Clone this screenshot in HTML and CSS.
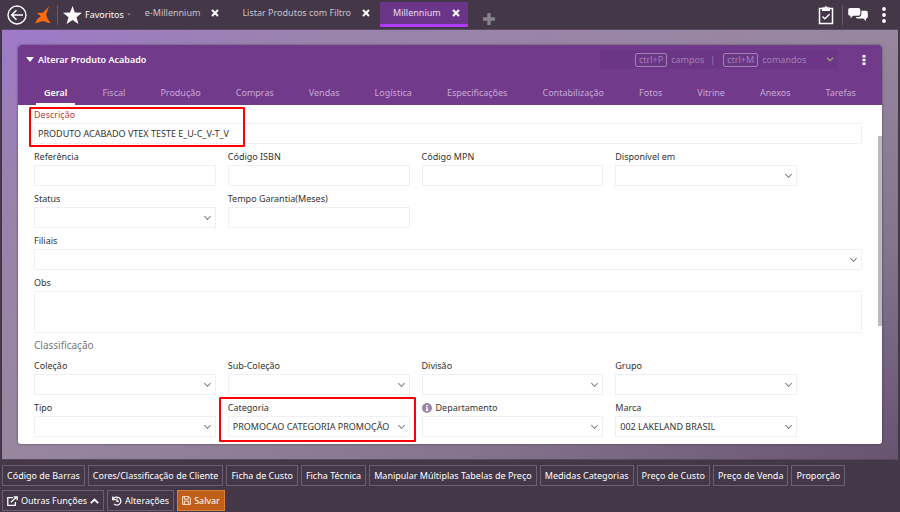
FILE: index.html
```
<!DOCTYPE html>
<html lang="pt-BR">
<head>
    <meta charset="UTF-8">
    <meta name="viewport" content="width=device-width, initial-scale=1">
    <title>Millennium</title>
    <link rel="stylesheet" href="styles.css">
</head>
<body>
    <header class="topbar">
        <button type="button" class="icon-button" aria-label="Voltar">
            <svg width="20" height="20" viewBox="0 0 20 20" fill="none" stroke="#fff">
                <circle cx="10" cy="10" r="9" stroke-width="1.4"/>
                <path d="M16 10H5M9.5 5.2L4.7 10l4.8 4.8" stroke-width="1.5"/>
            </svg>
        </button>
        <a href="#" class="logo" aria-label="Início">
            <svg width="16" height="18" viewBox="0 0 16 18" fill="#ff6a0a">
                <path d="M14 .5L11.200 8.200L12.200 12L15.600 17.500L8 15L0 17.500L2.500 12.800L6 10.300L1.800 7L8 6.800Z"/>
            </svg>
        </a>
        <button type="button" class="favorites">
            <svg width="19" height="18" viewBox="0 0 19 18" fill="#fff">
                <path d="M9.5 0l2.4 6.5 7.1.3-5.5 4.4 1.9 6.8-5.9-3.9L3.6 18l1.9-6.8L0 6.8l7.1-.3z"/>
            </svg>
            Favoritos
            <svg class="caret" width="4" height="3" viewBox="0 0 4 3" fill="#8b8190"><path d="M0 .5h4L2 2.5z"/></svg>
        </button>
        <nav class="windows">
            <div class="window">
                <a href="#">e-Millennium</a>
                <button type="button" class="close" aria-label="Fechar"><svg width="8" height="8" viewBox="0 0 8 8"><path d="M1 1l6 6M7 1L1 7"/></svg></button>
            </div>
            <div class="window">
                <a href="#">Listar Produtos com Filtro</a>
                <button type="button" class="close" aria-label="Fechar"><svg width="8" height="8" viewBox="0 0 8 8"><path d="M1 1l6 6M7 1L1 7"/></svg></button>
            </div>
            <div class="window window-active">
                <a href="#">Millennium</a>
                <button type="button" class="close" aria-label="Fechar"><svg width="8" height="8" viewBox="0 0 8 8"><path d="M1 1l6 6M7 1L1 7"/></svg></button>
            </div>
            <button type="button" class="add" aria-label="Nova aba">
                <svg width="12" height="12" viewBox="0 0 12 12" fill="#87838a"><path d="M4.3 0h3.4v4.3H12v3.4H7.7V12H4.3V7.7H0V4.3h4.3z"/></svg>
            </button>
        </nav>
        <div class="tools">
            <button type="button" class="icon-button" aria-label="Tarefas">
                <svg width="16" height="20" viewBox="0 0 16 20" fill="none" stroke="#fff">
                    <path d="M1.5 3.500h13v15h-13z" stroke-width="1.5"/>
                    <path d="M4 2.500h2.300a1.800 1.800 0 0 1 3.400 0H12v3.500H4z" fill="#fff" stroke="none"/>
                    <path d="M4.500 11.500l2.300 2.300 4.800-4.600" stroke-width="1.300"/>
                </svg>
            </button>
            <button type="button" class="icon-button chat" aria-label="Mensagens">
                <svg width="20" height="15" viewBox="0 0 20 15" fill="#fff">
                    <path d="M2 1h8.500a1.800 1.800 0 0 1 1.800 1.800V7a1.800 1.800 0 0 1-1.800 1.800H5L2.500 11.300V8.800H2A1.800 1.800 0 0 1 .2 7V2.800A1.800 1.800 0 0 1 2 1z"/>
                    <path d="M13.300 3.800H18A1.800 1.800 0 0 1 19.800 5.600V9.800A1.800 1.800 0 0 1 18 11.600V14l-2.600-2.400H9.800A1.800 1.800 0 0 1 8 9.900h2.900a2.400 2.400 0 0 0 2.400-2.400z"/>
                </svg>
            </button>
            <button type="button" class="icon-button" aria-label="Mais opções">
                <svg width="4" height="16" viewBox="0 0 4 16" fill="#fff"><circle cx="2" cy="2" r="1.900"/><circle cx="2" cy="8" r="1.900"/><circle cx="2" cy="14" r="1.900"/></svg>
            </button>
        </div>
    </header>

    <main class="workspace">
        <section class="card">
            <div class="card-header">
                <div class="title-row">
                    <h1>
                        <svg width="8" height="5" viewBox="0 0 8 5" fill="#fff"><path d="M0 0h8L4 5z"/></svg>
                        Alterar Produto Acabado
                    </h1>
                    <button type="button" class="search">
                        <kbd>ctrl+P</kbd> campos <span class="bar">|</span> <kbd>ctrl+M</kbd> comandos
                        <svg width="8" height="5" viewBox="0 0 8 5" fill="none" stroke="#a09a78" stroke-width="1.400"><path d="M1 .8l3 3 3-3"/></svg>
                    </button>
                    <button type="button" class="icon-button" aria-label="Opções">
                        <svg width="4" height="10" viewBox="0 0 4 10" fill="#fff"><path d="M.5 0h3v2.500h-3zM.5 3.700h3v2.500h-3zM.5 7.400h3v2.500h-3z"/></svg>
                    </button>
                </div>
                <nav class="tabs">
                    <a href="#" class="active">Geral</a>
                    <a href="#">Fiscal</a>
                    <a href="#">Produção</a>
                    <a href="#">Compras</a>
                    <a href="#">Vendas</a>
                    <a href="#">Logística</a>
                    <a href="#">Especificações</a>
                    <a href="#">Contabilização</a>
                    <a href="#">Fotos</a>
                    <a href="#">Vitrine</a>
                    <a href="#">Anexos</a>
                    <a href="#">Tarefas</a>
                </nav>
            </div>

            <form class="card-body">
                <div class="field required mark-descricao">
                    <label for="descricao">Descrição</label>
                    <input type="text" id="descricao" value="PRODUTO ACABADO VTEX TESTE E_U-C_V-T_V">
                </div>
                <div class="fields">
                    <div class="field">
                        <label for="referencia">Referência</label>
                        <input type="text" id="referencia">
                    </div>
                    <div class="field">
                        <label for="isbn">Código ISBN</label>
                        <input type="text" id="isbn">
                    </div>
                    <div class="field">
                        <label for="mpn">Código MPN</label>
                        <input type="text" id="mpn">
                    </div>
                    <div class="field">
                        <label for="disponivel">Disponível em</label>
                        <div class="select"><select id="disponivel"><option></option></select></div>
                    </div>
                    <div class="field">
                        <label for="status">Status</label>
                        <div class="select"><select id="status"><option></option></select></div>
                    </div>
                    <div class="field">
                        <label for="garantia">Tempo Garantia(Meses)</label>
                        <input type="text" id="garantia">
                    </div>
                </div>
                <div class="field">
                    <label for="filiais">Filiais</label>
                    <div class="select"><select id="filiais"><option></option></select></div>
                </div>
                <div class="field">
                    <label for="obs">Obs</label>
                    <textarea id="obs"></textarea>
                </div>
                <h2>Classificação</h2>
                <div class="fields">
                    <div class="field">
                        <label for="colecao">Coleção</label>
                        <div class="select"><select id="colecao"><option></option></select></div>
                    </div>
                    <div class="field">
                        <label for="subcolecao">Sub-Coleção</label>
                        <div class="select"><select id="subcolecao"><option></option></select></div>
                    </div>
                    <div class="field">
                        <label for="divisao">Divisão</label>
                        <div class="select"><select id="divisao"><option></option></select></div>
                    </div>
                    <div class="field">
                        <label for="grupo">Grupo</label>
                        <div class="select"><select id="grupo"><option></option></select></div>
                    </div>
                    <div class="field">
                        <label for="tipo">Tipo</label>
                        <div class="select"><select id="tipo"><option></option></select></div>
                    </div>
                    <div class="field mark-categoria">
                        <label for="categoria">Categoria</label>
                        <div class="select"><select id="categoria"><option>PROMOCAO CATEGORIA PROMOÇÃO</option></select></div>
                    </div>
                    <div class="field">
                        <label for="departamento">
                            <svg width="10" height="10" viewBox="0 0 10 10"><circle cx="5" cy="5" r="5" fill="#9a88a6"/><path d="M4.200 2h1.600v1.300H4.200zM3.900 4.200h1.900V7h.5v.9H3.700V7h.6V5.100h-.4z" fill="#fff"/></svg>
                            Departamento
                        </label>
                        <div class="select"><select id="departamento"><option></option></select></div>
                    </div>
                    <div class="field">
                        <label for="marca">Marca</label>
                        <div class="select"><select id="marca"><option>002 LAKELAND BRASIL</option></select></div>
                    </div>
                </div>
            </form>
            <div class="scrollbar"></div>
        </section>
    </main>

    <footer class="actions">
        <div class="action-row">
            <button type="button">Código de Barras</button>
            <button type="button">Cores/Classificação de Cliente</button>
            <button type="button">Ficha de Custo</button>
            <button type="button">Ficha Técnica</button>
            <button type="button">Manipular Múltiplas Tabelas de Preço</button>
            <button type="button">Medidas Categorias</button>
            <button type="button">Preço de Custo</button>
            <button type="button">Preço de Venda</button>
            <button type="button">Proporção</button>
        </div>
        <div class="action-row">
            <button type="button">
                <svg width="11" height="10" viewBox="0 0 11 10" fill="none" stroke="#fff" stroke-width="1.300"><path d="M6 1.700H.8v7.600h7.600V6M3.800 6.300L9.500 1.200M6.600.8h3.600v3.400"/></svg>
                Outras Funções
                <svg width="9" height="6" viewBox="0 0 9 6" fill="none" stroke="#fff" stroke-width="1.800"><path d="M.8 5.200l3.700-3.700 3.700 3.700"/></svg>
            </button>
            <button type="button">
                <svg width="10" height="10" viewBox="0 0 10 10" fill="none" stroke="#fff" stroke-width="1.300"><path d="M1.300 3.300A4 4 0 1 1 2 7.900M.8.600v3h3M5 2.600v2.800h1.800"/></svg>
                Alterações
            </button>
            <button type="submit" class="save">
                <svg width="9" height="9" viewBox="0 0 9 9" fill="none" stroke="#ffe2c8"><path d="M.6.600h6.300l1.500 1.500v6.300H.6zM2.300.8v2.400h4V.8M2.300 8.200V5.200h4.400v3"/></svg>
                Salvar
            </button>
        </div>
    </footer>
</body>
</html>
```
FILE: styles.css
```
*,
*::before,
*::after {
    box-sizing: border-box;
}

body {
    display: flex;
    flex-direction: column;
    min-height: 100vh;
    margin: 0;
    background: #433748;
    color: #333;
    font-family: "Noto Sans", "Open Sans", sans-serif;
    font-size: 9px;
    line-height: 14px;
}

button,
input,
select,
textarea {
    margin: 0;
    font: inherit;
    color: inherit;
}

button {
    padding: 0;
    border: 0;
    background: none;
    cursor: pointer;
}

a {
    color: inherit;
    text-decoration: none;
}

svg {
    flex: none;
}

.icon-button {
    display: flex;
    align-items: center;
}

/* top bar */
.topbar {
    display: flex;
    align-items: center;
    height: 29px;
    padding: 0 14px 0 7px;
    color: #fff;
}

.logo {
    display: flex;
    margin-left: 8px;
}

.favorites {
    display: flex;
    align-items: center;
    gap: 3px;
    height: 20px;
    margin-left: 6px;
    padding-left: 5px;
    border-left: 1px solid #65596a;
}

.windows {
    display: flex;
    align-items: center;
    gap: 2px;
    flex: 1;
    margin-left: 1px;
}

.window {
    display: flex;
    align-items: center;
    gap: 11px;
    height: 25px;
    padding: 0 8px 0 13px;
    border-bottom: 3px solid transparent;
    color: #c9c3cc;
}

.window-active {
    border-color: #b13cf5;
    background: #6c3688;
    color: #e8dcf0;
}

.close {
    display: flex;
}

.close path {
    fill: none;
    stroke: #fff;
    stroke-width: 2;
}

.add {
    display: flex;
    margin: 8px 0 0 13px;
}

.tools {
    display: flex;
    align-items: center;
    gap: 8px;
}

.chat {
    height: 20px;
    margin-right: 6px;
    padding-left: 5px;
    border-left: 1px solid #65596a;
}

/* workspace */
.workspace {
    flex: 1;
    margin: 0 2px;
    padding: 15px 16px;
    border: solid #594a63;
    border-width: 1px 0;
    background: linear-gradient(to bottom right, #9e79ca 0%, #9a83ad 18%, #98869f 50%, #84748e 75%, #665370 100%);
}

.card {
    position: relative;
    border-radius: 3px;
    background: #fff;
    box-shadow: 0 0 3px rgba(0, 0, 0, 0.4);
}

.card-header {
    display: flex;
    flex-direction: column;
    justify-content: space-between;
    height: 60px;
    padding: 5px 18px 0;
    border-radius: 3px 3px 0 0;
    background: #713a8b;
    color: #fff;
}

.title-row {
    display: flex;
    align-items: center;
    margin-left: -10px;
    margin-right: -2px;
}

h1 {
    display: flex;
    align-items: center;
    gap: 4px;
    flex: 1;
    margin: 0;
    font-size: 9px;
    font-weight: 600;
}

.search {
    display: flex;
    align-items: center;
    gap: 4px;
    height: 19px;
    width: 238px;
    margin-right: 24px;
    padding: 0 4px 0 35px;
    border-radius: 3px;
    background: #6b3685;
    color: #a37fb4;
}

.search kbd {
    padding: 0 3px;
    border: 1px solid #a37fb4;
    border-radius: 2px;
    font: inherit;
    line-height: 12px;
}

.search .bar {
    margin: 0 4px 0 2px;
}

.search svg {
    margin-left: auto;
}

.tabs {
    display: flex;
    justify-content: space-between;
    line-height: 16px;
}

.tabs a {
    height: 20px;
    padding: 0 8px;
    border-bottom: 2px solid transparent;
    color: #c9a9d6;
}

.tabs .active {
    border-color: #fff;
    color: #fff;
    font-weight: 600;
}

/* form */
.card-body {
    display: flex;
    flex-direction: column;
    gap: 5px;
    padding: 2px 20px 7px 16px;
}

.fields {
    display: grid;
    grid-template-columns: repeat(4, 1fr);
    gap: 5px 12px;
    padding-right: 65px;
}

.field {
    display: flex;
    flex-direction: column;
    gap: 2px;
    position: relative;
    min-width: 0;
}

.field label {
    display: flex;
    align-items: center;
    gap: 4px;
    height: 14px;
    padding-top: 2px;
}

.required label {
    color: #b8433c;
}

.field input,
.field select,
.field textarea {
    display: block;
    width: 100%;
    height: 21px;
    padding: 0 3px;
    border: 1px solid #efeff4;
    border-radius: 0;
    outline: 0;
    background: #fff;
}

.field select {
    appearance: none;
    padding: 0 14px 0 4px;
}

.field textarea {
    height: 42px;
    resize: none;
}

.select {
    position: relative;
}

.select::after {
    content: "";
    position: absolute;
    top: 7px;
    right: 6px;
    width: 5px;
    height: 5px;
    border: solid #808080;
    border-width: 0 1px 1px 0;
    transform: rotate(45deg);
    pointer-events: none;
}

h2 {
    margin: 0;
    color: #777;
    font-size: 10px;
    font-weight: 400;
    line-height: 15px;
}

.mark-descricao::before,
.mark-categoria::before {
    content: "";
    position: absolute;
    z-index: 1;
    border: 2px solid #f00;
    border-radius: 1px;
    pointer-events: none;
}

.mark-descricao::before {
    top: 0;
    left: -5px;
    width: 216px;
    height: 40px;
}

.mark-categoria::before {
    inset: -3px -6px -5px -9px;
}

.scrollbar {
    position: absolute;
    top: 91px;
    right: 0;
    width: 4px;
    height: 190px;
    background: #bbb;
}

/* bottom actions */
.actions {
    display: flex;
    flex-direction: column;
    gap: 4px;
    padding: 5px 2px 1px;
    color: #fff;
}

.action-row {
    display: flex;
    flex-wrap: wrap;
    gap: 3px;
}

.action-row button {
    display: flex;
    align-items: center;
    gap: 3px;
    height: 21px;
    padding: 0 4px;
    border: 1px solid #6b5f71;
}

.action-row .save {
    border-color: #d9813a;
    background: #bf5f1a;
}
```
